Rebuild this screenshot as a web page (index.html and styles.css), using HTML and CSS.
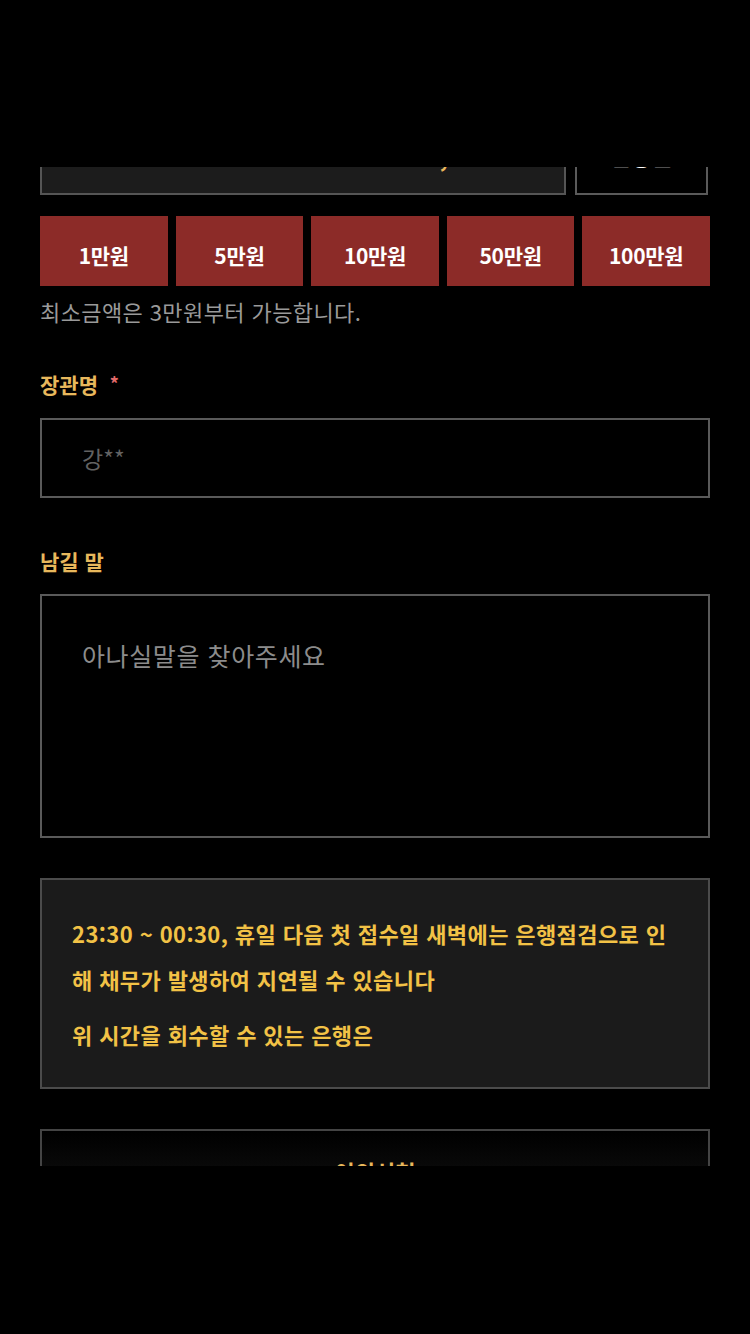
FILE: index.html
```html
<!DOCTYPE html>
<html lang="ko">
<head>
    <meta charset="UTF-8">
    <meta name="viewport" content="width=device-width, initial-scale=1.0">
    <title>후원하기</title>
    <link rel="stylesheet" href="styles.css">
</head>
<body>
    <div class="top-bar"></div>
    <div class="scroll-area">
        <form class="donate-form" id="donate-form">
            <div class="amount-row">
                <div class="amount-input">30,000</div>
                <button type="button" class="amount-side">금융권</button>
            </div>
            <div class="quick-amounts">
                <button type="button" class="quick-btn">1만원</button>
                <button type="button" class="quick-btn">5만원</button>
                <button type="button" class="quick-btn">10만원</button>
                <button type="button" class="quick-btn">50만원</button>
                <button type="button" class="quick-btn">100만원</button>
            </div>
            <p class="hint">최소금액은 3만원부터 가능합니다.</p>

            <label class="field-label">장관명 <span class="required">*</span></label>
            <input class="text-input" type="text" placeholder="강**">

            <label class="field-label label-msg">남길 말</label>
            <textarea class="text-area" placeholder="아나실말을 찾아주세요"></textarea>

            <div class="notice">
                <p>23:30 ~ 00:30, 휴일 다음 첫 접수일 새벽에는 은행점검으로 인해 채무가 발생하여 지연될 수 있습니다</p>
                <p>위 시간을 회수할 수 있는 은행은</p>
            </div>

            <button type="submit" class="submit-btn">이의신청</button>
        </form>
    </div>
    <div class="bottom-bar"></div>
</body>
</html>
```

FILE: styles.css
```css
body {
    margin: 0;
    background: #000;
    font-family: "Noto Sans CJK KR", "Noto Sans", sans-serif;
}
.top-bar {
    height: 167px;
}
.scroll-area {
    height: 999px;
    overflow: hidden;
}
.bottom-bar {
    height: 168px;
}
.donate-form {
    padding: 0 40px;
    margin-top: -52px;
}
.amount-row {
    display: flex;
    gap: 9px;
}
.amount-input {
    flex: 0 0 526px;
    box-sizing: border-box;
    height: 80px;
    background: #1c1c1c;
    border: 2px solid #555;
    color: #e8b85c;
    font-size: 26px;
    font-weight: 700;
    line-height: 76px;
    text-align: right;
    padding-right: 70px;
}
.amount-side {
    width: 133px;
    height: 80px;
    box-sizing: border-box;
    background: #000;
    border: 2px solid #5a5a5a;
    color: #fff;
    font-family: inherit;
    font-size: 22px;
    font-weight: 700;
}
.quick-amounts {
    display: grid;
    grid-template-columns: repeat(5, 1fr);
    gap: 8px;
    margin-top: 21px;
}
.quick-btn {
    height: 70px;
    padding-top: 8px;
    border: none;
    background: #8c2b28;
    color: #fff;
    font-family: inherit;
    font-size: 21px;
    font-weight: 700;
    letter-spacing: -0.3px;
    cursor: pointer;
}
.hint {
    margin: 10px 0 0;
    color: #9a9a9a;
    font-size: 22px;
    line-height: 30px;
    letter-spacing: 0.4px;
}
.field-label {
    display: block;
    margin-top: 42px;
    color: #e8b85c;
    font-size: 21px;
    font-weight: 700;
    line-height: 30px;
}
.field-label .required {
    color: #e26a6a;
    font-size: 18px;
    margin-left: 6px;
    vertical-align: 2px;
}
.label-msg {
    margin-top: 48px;
}
.text-input {
    display: block;
    box-sizing: border-box;
    width: 100%;
    height: 80px;
    margin-top: 19px;
    padding: 0 40px;
    background: #000;
    border: 2px solid #5a5a5a;
    color: #ccc;
    font-family: inherit;
    font-size: 23px;
    outline: none;
}
.text-input::placeholder {
    color: #626262;
}
.text-area {
    display: block;
    box-sizing: border-box;
    width: 100%;
    height: 244px;
    margin-top: 18px;
    padding: 41px 40px;
    background: #000;
    border: 2px solid #5a5a5a;
    color: #ccc;
    font-family: inherit;
    font-size: 25px;
    line-height: 36px;
    letter-spacing: 0.6px;
    resize: none;
    outline: none;
}
.text-area::placeholder {
    color: #8c8c8c;
}
.notice {
    margin-top: 40px;
    padding: 30px 30px;
    background: #1b1b1b;
    border: 2px solid #4b4b4b;
}
.notice p {
    margin: 0;
    color: #f2c246;
    font-size: 22px;
    font-weight: 700;
    line-height: 46px;
    letter-spacing: 0.4px;
}
.notice p + p {
    margin-top: 9px;
}
.submit-btn {
    display: block;
    width: 100%;
    height: 84px;
    margin-top: 40px;
    background: linear-gradient(#000, #141414);
    border: 2px solid #444;
    color: #e8b85c;
    font-family: inherit;
    font-size: 22px;
    font-weight: 700;
}
```
